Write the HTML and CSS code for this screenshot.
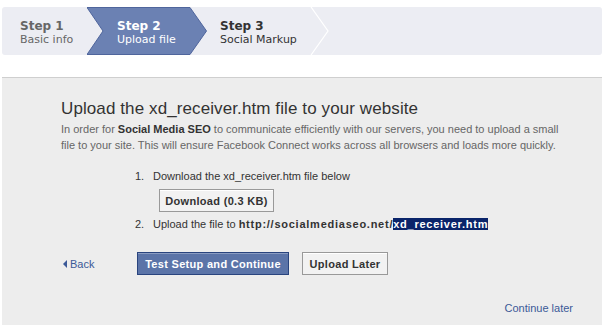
FILE: index.html
```html
<!DOCTYPE html>
<html>
<head>
<meta charset="utf-8">
<link rel="stylesheet" href="styles.css">
</head>
<body>
<div class="steps">
  <div class="step step-done">
    <div class="step-num">Step 1</div>
    <div class="step-name">Basic info</div>
  </div>
  <div class="step step-active">
    <div class="step-num">Step 2</div>
    <div class="step-name">Upload file</div>
  </div>
  <div class="step step-next">
    <div class="step-num">Step 3</div>
    <div class="step-name">Social Markup</div>
  </div>
</div>

<div class="panel">
  <h1 class="title">Upload the xd_receiver.htm file to your website</h1>
  <p class="intro">In order for <b>Social Media SEO</b> to communicate efficiently with our servers, you need to upload a small file to your site. This will ensure Facebook Connect works across all browsers and loads more quickly.</p>

  <div class="item">
    <span class="num">1.</span>
    <span>Download the xd_receiver.htm file below</span>
  </div>
  <div class="dl-row"><button class="btn btn-gray">Download (0.3 KB)</button></div>
  <div class="item item-2">
    <span class="num">2.</span>
    <span>Upload the file to <b>http://socialmediaseo.net/<span class="sel">xd_receiver.htm</span></b></span>
  </div>

  <div class="actions">
    <a class="back" href="#"><span class="tri"></span>Back</a>
    <button class="btn btn-blue">Test Setup and Continue</button>
    <button class="btn btn-gray">Upload Later</button>
  </div>

  <div class="footer"><a class="link" href="#">Continue later</a></div>
</div>
</body>
</html>
```

FILE: styles.css
```css
html, body {
  margin: 0;
  padding: 0;
  background: #fff;
}
body {
  width: 604px;
  font-family: "Liberation Sans", Arial, sans-serif;
  font-size: 11px;
}

.steps {
  margin: 7px 2px 0;
  height: 48px;
  background: #ecedf3;
  border-radius: 3px;
  display: flex;
}
.step {
  box-sizing: border-box;
  padding-top: 12px;
  font-family: "DejaVu Sans", Verdana, sans-serif;
  line-height: 14px;
}
.step-num {
  font-size: 12px;
  font-weight: bold;
}
.step-name {
  font-size: 11px;
}
.step-done {
  width: 85px;
  padding-left: 18px;
  color: #666;
}
.step-active {
  width: 120px;
  padding-left: 30px;
  color: #fff;
  background: url("data:image/svg+xml,%3Csvg xmlns='http://www.w3.org/2000/svg' width='120' height='48' viewBox='0 0 120 48'%3E%3Cpolygon points='0,0.5 103,0.5 119.5,24 103,47.5 0,47.5 16,24' fill='%236b81b3' stroke='%234f659c' stroke-width='1'/%3E%3C/svg%3E") no-repeat 0 0;
}
.step-next {
  width: 125px;
  padding-left: 13px;
  color: #333;
  background: url("data:image/svg+xml,%3Csvg xmlns='http://www.w3.org/2000/svg' width='125' height='48' viewBox='0 0 125 48'%3E%3Cpolyline points='104,0 121,24 104,48' fill='none' stroke='%23ffffff' stroke-width='1.2'/%3E%3C/svg%3E") no-repeat 0 0;
}

.panel {
  margin: 22px 2px 0;
  height: 248px;
  box-sizing: border-box;
  border-top: 1px solid #cfcfcf;
  background: #ededed;
  padding: 21px 29px 0 59px;
  color: #555;
}
.title {
  margin: 0;
  font-size: 17px;
  letter-spacing: 0.1px;
  line-height: 20px;
  font-weight: normal;
  color: #333;
}
.intro {
  margin: 2px 0 0;
  line-height: 16px;
  color: #666;
  width: 500px;
}
.intro b {
  color: #333;
}

.item {
  display: flex;
  margin: 15px 0 0 74px;
  line-height: 16px;
  color: #333;
}
.item-2 {
  margin-top: 4px;
}
.num {
  width: 18px;
}
.item b {
  color: #333;
  letter-spacing: 0.75px;
}
.sel {
  background: #0a246a;
  color: #fff;
}
.dl-row {
  margin: 5px 0 0 98px;
}

.btn {
  box-sizing: border-box;
  height: 23px;
  padding: 0 5px;
  font-family: "Liberation Sans", Arial, sans-serif;
  font-size: 11px;
  font-weight: bold;
  letter-spacing: 0.3px;
  cursor: pointer;
}
.btn-gray {
  background: #f2f2f2;
  color: #333;
  border: 1px solid #999;
  box-shadow: inset 0 1px 0 #fff;
}
.dl-row .btn-gray {
  width: 115px;
}
.btn-blue {
  background: #5b74a8;
  color: #fff;
  border: 1px solid #29447e;
  box-shadow: inset 0 1px 0 #8a9cc2;
}

.actions {
  display: flex;
  align-items: center;
  margin-top: 20px;
  gap: 13px;
}
.actions .btn-blue {
  width: 152px;
}
.actions .btn-gray {
  width: 86px;
}
.back {
  width: 61px;
  color: #3b5998;
  text-decoration: none;
  display: flex;
  align-items: center;
  padding-left: 2px;
}
.tri {
  width: 0;
  height: 0;
  border-top: 4px solid transparent;
  border-bottom: 4px solid transparent;
  border-right: 4px solid #3b5998;
  margin-right: 3px;
}

.footer {
  margin-top: 25px;
  text-align: right;
  line-height: 16px;
}
.link {
  color: #3b5998;
  text-decoration: none;
}
```
